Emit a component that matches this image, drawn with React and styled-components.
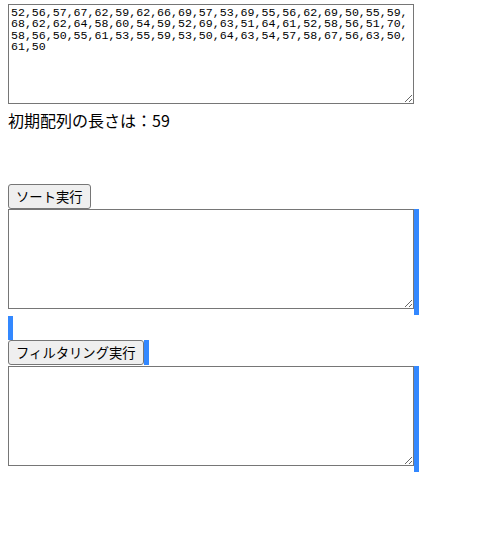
import React, { useState } from 'react'
import styled, { createGlobalStyle } from 'styled-components'

const initial = [
  52, 56, 57, 67, 62, 59, 62, 66, 69, 57, 53, 69, 55, 56, 62, 69, 50, 55, 59,
  68, 62, 62, 64, 58, 60, 54, 59, 52, 69, 63, 51, 64, 61, 52, 58, 56, 51, 70,
  58, 56, 50, 55, 61, 53, 55, 59, 53, 50, 64, 63, 54, 57, 58, 67, 56, 63, 50,
  61, 50,
]

const App = () => {
  const [source, setSource] = useState(initial.join(','))
  const [sorted, setSorted] = useState('')
  const [filtered, setFiltered] = useState('')

  const numbers = source
    .split(',')
    .map((v) => v.trim())
    .filter((v) => v !== '')

  const handleSort = () => {
    setSorted([...numbers].map(Number).sort((a, b) => a - b).join(','))
  }

  const handleFilter = () => {
    setFiltered(numbers.map(Number).filter((n) => n >= 60).join(','))
  }

  return (
    <Page>
      <GlobalStyle />
      <SourceArea value={source} onChange={(e) => setSource(e.target.value)} />
      <LengthText>初期配列の長さは：{numbers.length}</LengthText>
      <Row>
        <ActionButton onClick={handleSort}>ソート実行</ActionButton>
      </Row>
      <Row>
        <ResultArea value={sorted} readOnly />
        <Marker $height={106} />
      </Row>
      <Marker $height={24} $top={1} />
      <Row>
        <ActionButton onClick={handleFilter}>フィルタリング実行</ActionButton>
        <Marker $height={25} />
      </Row>
      <Row $top={1}>
        <ResultArea value={filtered} readOnly />
        <Marker $height={106} />
      </Row>
    </Page>
  )
}

export default App

const GlobalStyle = createGlobalStyle`
  body {
    margin: 0;
    background: #fff;
    font-family: "Noto Sans CJK JP", "Noto Sans", sans-serif;
  }
`

const Page = styled.div`
  padding: 4px 8px;
  display: flex;
  flex-direction: column;
  align-items: flex-start;
`

const SourceArea = styled.textarea`
  box-sizing: border-box;
  width: 406px;
  height: 100px;
  margin: 0;
  padding: 2px;
  border: 1px solid #767676;
  font-family: "Liberation Mono", monospace;
  font-size: 11.6px;
  line-height: 11.3px;
  color: #000;
  resize: both;
  outline: none;
`

const ResultArea = styled(SourceArea)``

const LengthText = styled.div`
  margin: 5px 0 52px;
  height: 23px;
  font-size: 16px;
  line-height: 23px;
  color: #000;
`

const Row = styled.div`
  display: flex;
  align-items: flex-start;
  margin-top: ${(p) => p.$top || 0}px;
`

const ActionButton = styled.button`
  box-sizing: border-box;
  height: 25px;
  margin: 0;
  padding: 1px 7px;
  background: #efefef;
  border: 1px solid #767676;
  border-radius: 3px;
  font-family: "Noto Sans CJK JP", sans-serif;
  font-size: 13.33px;
  color: #000;
  cursor: pointer;
  white-space: nowrap;
`

const Marker = styled.div`
  width: 5px;
  height: ${(p) => p.$height}px;
  margin-top: ${(p) => p.$top || 0}px;
  background: #3388ff;
  flex-shrink: 0;
`
